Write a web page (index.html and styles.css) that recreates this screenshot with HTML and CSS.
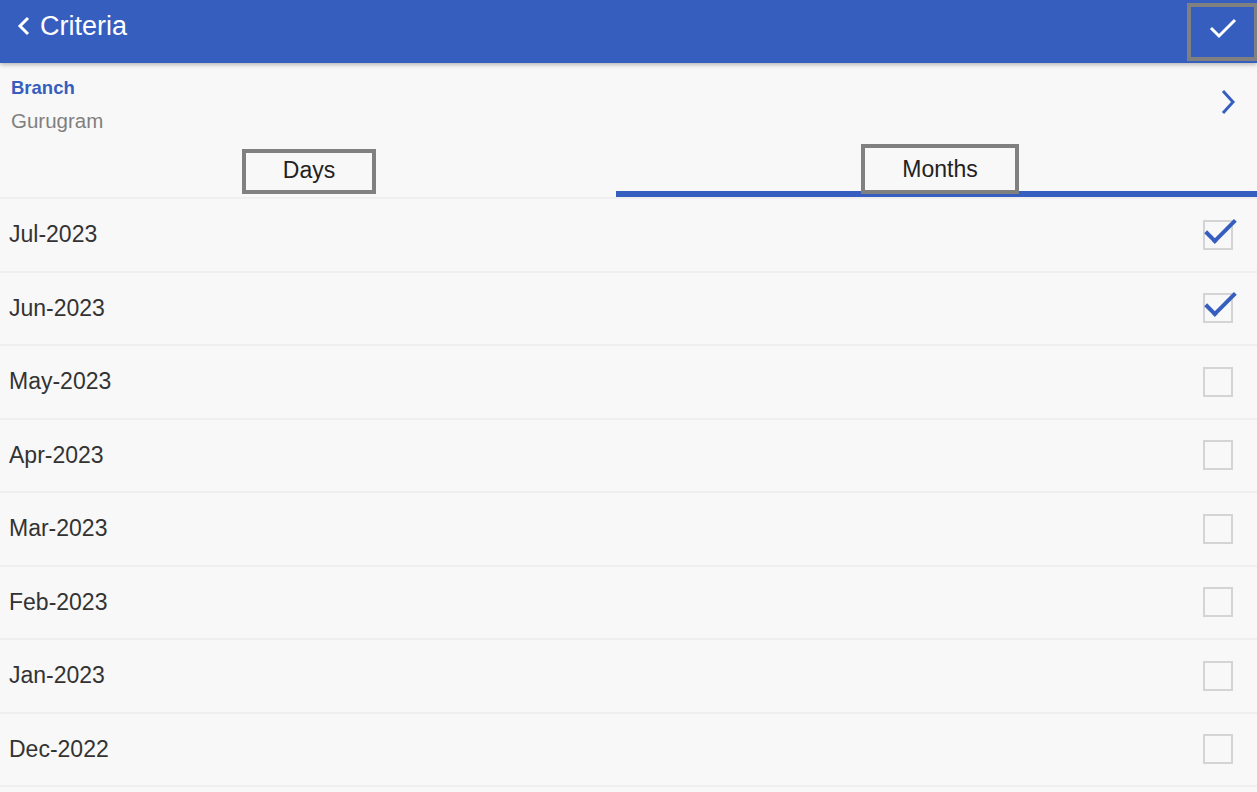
FILE: index.html
```html
<!DOCTYPE html>
<html>
<head>
<meta charset="utf-8">
<link rel="stylesheet" href="styles.css">
</head>
<body>
<header class="toolbar">
  <div class="title-wrap">
    <svg class="back" width="14" height="22" viewBox="0 0 14 22"><path d="M11 3 L3 11 L11 19" fill="none" stroke="#fff" stroke-width="3"/></svg>
    <span class="title">Criteria</span>
  </div>
  <div class="done">
    <svg width="30" height="24" viewBox="0 0 30 24"><path d="M3 12 L11 20 L27 4" fill="none" stroke="#fff" stroke-width="3"/></svg>
  </div>
</header>
<section class="branch">
  <div class="branch-text">
    <div class="branch-label">Branch</div>
    <div class="branch-value">Gurugram</div>
  </div>
  <svg class="chev" width="14" height="26" viewBox="0 0 14 26"><path d="M2 2 L12 13 L2 24" fill="none" stroke="#365ebf" stroke-width="3"/></svg>
</section>
<nav class="tabs">
  <div class="tab"><span class="tab-box tab-box-days">Days</span></div>
  <div class="tab tab-active"><span class="tab-box tab-box-months">Months</span></div>
</nav>
<ul class="list">
  <li class="row"><span>Jul-2023</span><span class="cb checked"></span></li>
  <li class="row"><span>Jun-2023</span><span class="cb checked"></span></li>
  <li class="row"><span>May-2023</span><span class="cb"></span></li>
  <li class="row"><span>Apr-2023</span><span class="cb"></span></li>
  <li class="row"><span>Mar-2023</span><span class="cb"></span></li>
  <li class="row"><span>Feb-2023</span><span class="cb"></span></li>
  <li class="row"><span>Jan-2023</span><span class="cb"></span></li>
  <li class="row"><span>Dec-2022</span><span class="cb"></span></li>
</ul>
</body>
</html>
```
FILE: styles.css
```css
* { box-sizing: border-box; }
html, body { margin: 0; padding: 0; }
body {
  background: #f8f8f8;
  font-family: "Liberation Sans", Arial, sans-serif;
  color: #333;
  width: 1257px;
  height: 792px;
  overflow: hidden;
}
.toolbar {
  height: 63px;
  background: #365ebf;
  display: flex;
  align-items: center;
  justify-content: space-between;
  box-shadow: 0 2px 4px rgba(0,0,0,0.25);
  position: relative;
  z-index: 2;
}
.title-wrap {
  display: flex;
  align-items: center;
  padding-left: 17px;
  margin-top: -11px;
}
.back { margin-right: 9px; }
.title {
  color: #fff;
  font-size: 27px;
}
.done {
  width: 70px;
  height: 58px;
  border: 4px solid #808080;
  border-right-width: 3px;
  display: flex;
  align-items: center;
  justify-content: center;
  align-self: flex-start;
  margin-top: 3px;
  padding-bottom: 9px;
}
.branch {
  display: flex;
  align-items: center;
  justify-content: space-between;
  padding: 7px 22px 0 11px;
  height: 82px;
}
.branch-text { display: flex; flex-direction: column; align-self: flex-start; padding-top: 6px; }
.branch-label {
  color: #365ebf;
  font-weight: bold;
  font-size: 18.5px;
  line-height: 24px;
}
.branch-value {
  color: #808080;
  font-size: 20.5px;
  line-height: 24px;
  margin-top: 9px;
}
.chev { margin-top: -11px; }
.tabs {
  display: grid;
  grid-template-columns: 616px 1fr;
  height: 54px;
  border-bottom: 2px solid #efefef;
}
.tab {
  display: flex;
  justify-content: center;
  align-items: flex-start;
  position: relative;
}
.tab-active::after {
  content: "";
  position: absolute;
  left: 0; right: 0; bottom: 0;
  height: 6px;
  background: #365ebf;
}
.tab-box {
  border: 4px solid #808080;
  font-size: 23px;
  color: #222;
  display: flex;
  justify-content: center;
  align-items: center;
  position: relative;
  z-index: 1;
}
.tab-box-days { width: 134px; height: 45px; margin-top: 4px; padding-bottom: 2px; margin-left: 2px; }
.tab-box-months { width: 158px; height: 50px; margin-top: -1px; padding-bottom: 0; margin-left: 7px; }
.list { list-style: none; margin: 0; padding: 0; }
.row {
  height: 73.5px;
  border-bottom: 2px solid #efefef;
  display: flex;
  align-items: center;
  justify-content: space-between;
  padding: 0 24px 0 9px;
  font-size: 23px;
  color: #333;
}
.cb {
  width: 30px;
  height: 30px;
  border: 2px solid #d4d4d4;
  position: relative;
  margin-top: 0;
}
.checked::after {
  content: "";
  position: absolute;
  left: 8px;
  top: -10px;
  width: 11px;
  height: 27px;
  border-right: 4px solid #365ebf;
  border-bottom: 4px solid #365ebf;
  transform: rotate(45deg);
  transform-origin: center;
}
```
